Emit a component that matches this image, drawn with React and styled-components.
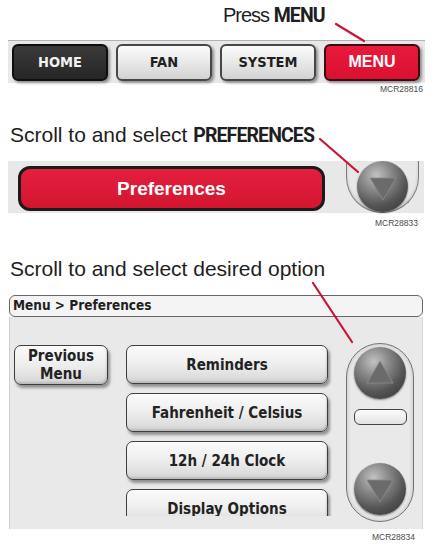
import React from 'react';
import styled, { createGlobalStyle } from 'styled-components';

const GlobalStyle = createGlobalStyle`
  body {
    margin: 0;
    background: #fff;
    font-family: "Liberation Sans", Arial, sans-serif;
    color: #1e1e1e;
  }
`;

const Page = styled.div`
  position: relative;
  width: 435px;
  height: 550px;
  box-sizing: border-box;
  padding: 3px 10px 0 8px;
  overflow: hidden;
`;

const Caption = styled.div`
  height: 24px;
  font-size: ${p => p.size || 21}px;
  line-height: 24px;
  margin-top: ${p => p.top || 0}px;
  padding-left: ${p => p.indent || 2}px;
  letter-spacing: ${p => p.tight ? '-1px' : '0'};
  white-space: nowrap;
`;

// condensed bold keyword inside a caption
const Strong = styled.b`
  font-family: Roboto, "Liberation Sans", sans-serif;
  font-weight: 700;
  font-size: 19.5px;
  line-height: 1;
  letter-spacing: -0.9px;
`;

const FigCode = styled.div`
  font-size: 8.5px;
  line-height: 10px;
  color: #4a4a4a;
  text-align: right;
  margin-top: ${p => p.top || 1}px;
  padding-right: ${p => p.right || 2}px;
`;

/* ---- top bar ---- */

const TopBar = styled.div`
  margin-top: 13px;
  width: 417px;
  height: 43px;
  box-sizing: border-box;
  display: flex;
  align-items: center;
  gap: 8px;
  padding: 0 5px 0 4px;
  background: #e8e8e8;
  border-top: 1px solid #b2b2b2;
`;

const tones = {
  dark: { bg: 'linear-gradient(#3a3a3a, #262626)', fg: '#f2f2f2', border: '#0e0e0e' },
  light: { bg: 'linear-gradient(#fbfbfb, #e4e4e4 60%, #d2d2d2)', fg: '#1f1f1f', border: '#474747' },
  red: { bg: 'linear-gradient(#e81a3d, #d9112f)', fg: '#fff', border: '#3a0b10' },
};

const TabButton = styled.div`
  flex: 1;
  height: 37px;
  box-sizing: border-box;
  display: flex;
  align-items: center;
  justify-content: center;
  border-radius: 6px;
  border: 2px solid ${p => tones[p.tone].border};
  background: ${p => tones[p.tone].bg};
  color: ${p => tones[p.tone].fg};
  box-shadow: 2px 2px 3px rgba(0, 0, 0, 0.4);
  font-family: ${p => p.tone === 'red'
    ? '"Liberation Sans", Arial, sans-serif'
    : '"DejaVu Sans Condensed", "DejaVu Sans", sans-serif'};
  font-weight: 700;
  font-size: ${p => p.tone === 'red' ? 16 : 14.5}px;
`;

/* ---- preferences bar ---- */

const SelectBar = styled.div`
  margin-top: 14px;
  width: 416px;
  height: 52px;
  box-sizing: border-box;
  display: flex;
  align-items: flex-start;
  padding: 5px 5px 0 10px;
  background: #e8e8e8;
`;

const PrefButton = styled.div`
  width: 307px;
  height: 45px;
  box-sizing: border-box;
  display: flex;
  align-items: center;
  justify-content: center;
  border: 3px solid #1b1b1b;
  border-radius: 12px;
  background: linear-gradient(#e3203f, #d3152f);
  color: #fff;
  font-weight: 700;
  font-size: 19px;
`;

const HalfWell = styled.div`
  margin-left: auto;
  margin-top: -5px;
  width: 73px;
  height: 52px;
  box-sizing: border-box;
  display: flex;
  justify-content: center;
  border: 1.5px solid #7a7a7a;
  border-top: none;
  border-radius: 0 0 36px 36px;
  box-shadow: inset 0 -2px 3px rgba(0, 0, 0, 0.15);
`;

/* ---- menu panel ---- */

const Panel = styled.div`
  margin-top: 14px;
  margin-left: 1px;
  width: 414px;
`;

const PanelHead = styled.div`
  height: 22px;
  box-sizing: border-box;
  border: 1.5px solid #666;
  border-radius: 6px;
  background: #f4f4f4;
  padding-left: 3px;
  line-height: 19px;
  font-family: "DejaVu Sans Condensed", "DejaVu Sans", sans-serif;
  font-weight: 700;
  font-size: 13.5px;
  color: #1f1f1f;
`;

const PanelBody = styled.div`
  height: 212px;
  box-sizing: border-box;
  display: flex;
  align-items: flex-start;
  padding: 28px 0 0 4px;
  background: #e9e9e9;
  border-left: 1px solid #cfcfcf;
  border-right: 1px solid #d6d6d6;
`;

const OptionList = styled.div`
  margin-left: 18px;
  width: 202px;
  height: 171px;
  overflow: hidden;
  display: flex;
  flex-direction: column;
  gap: 9px;
  padding: 0 4px 0 0;
`;

const KeyButton = styled.div`
  width: ${p => p.w || 202}px;
  height: ${p => p.h || 39}px;
  flex: none;
  box-sizing: border-box;
  display: flex;
  align-items: center;
  justify-content: center;
  text-align: center;
  border: 1.5px solid #3e3e3e;
  border-radius: 7px;
  background: linear-gradient(#fbfbfb, #ececec 55%, #d4d4d4);
  box-shadow: 2px 3px 3px rgba(0, 0, 0, 0.38), inset -1px -2px 2px rgba(0, 0, 0, 0.12);
  font-family: "DejaVu Sans Condensed", "DejaVu Sans", sans-serif;
  font-weight: 700;
  font-size: 15px;
  line-height: 18px;
  color: #222;
`;

const ScrollWell = styled.div`
  margin-left: 14px;
  margin-top: -2px;
  width: 68px;
  height: 179px;
  box-sizing: border-box;
  display: flex;
  flex-direction: column;
  align-items: center;
  padding-top: 3px;
  border: 1.5px solid #727272;
  border-radius: 34px;
  box-shadow: inset 0 0 4px rgba(0, 0, 0, 0.18);
`;

const Slot = styled.div`
  margin: 10px 0 38px;
  width: 53px;
  height: 16px;
  box-sizing: border-box;
  border: 1.5px solid #444;
  border-radius: 6px;
  background: linear-gradient(#fdfdfd, #e2e2e2);
`;

const Ball = styled.div`
  width: ${p => p.size}px;
  height: ${p => p.size}px;
  flex: none;
  border-radius: 50%;
  display: flex;
  align-items: center;
  justify-content: center;
  background: radial-gradient(circle at 38% 28%, #c2c2c2 0%, #8a8a8a 30%, #555 62%, #2f2f2f 100%);
  box-shadow: 0 1px 2px rgba(0, 0, 0, 0.45);
`;

const Overlay = styled.svg`
  position: absolute;
  top: 0;
  left: 0;
  pointer-events: none;
`;

function ScrollBall({ size = 52, dir = 'down' }) {
  const pts = dir === 'down' ? '1,1 27,1 14,23' : '14,1 27,23 1,23';
  return (
    <Ball size={size}>
      <svg width="28" height="24" viewBox="0 0 28 24" style={{ marginTop: dir === 'down' ? 4 : -2 }}>
        <polygon points={pts} fill="#6b6b6b" stroke="#8c8c8c" strokeWidth="0.8" strokeLinejoin="round" />
      </svg>
    </Ball>
  );
}

const tabs = [
  { label: 'HOME', tone: 'dark' },
  { label: 'FAN', tone: 'light' },
  { label: 'SYSTEM', tone: 'light' },
  { label: 'MENU', tone: 'red' },
];

const options = ['Reminders', 'Fahrenheit / Celsius', '12h / 24h Clock', 'Display Options'];

export default function App() {
  return (
    <>
      <GlobalStyle />
      <Page>
        <Caption size={20} indent={215} tight>
          Press <Strong>MENU</Strong>
        </Caption>
        <TopBar>
          {tabs.map(t => (
            <TabButton key={t.label} tone={t.tone}>{t.label}</TabButton>
          ))}
        </TopBar>
        <FigCode right={2}>MCR28816</FigCode>

        <Caption top={29}>
          Scroll to and select <Strong>PREFERENCES</Strong>
        </Caption>
        <SelectBar>
          <PrefButton>Preferences</PrefButton>
          <HalfWell>
            <ScrollBall size={51} dir="down" />
          </HalfWell>
        </SelectBar>
        <FigCode top={5} right={7}>MCR28833</FigCode>

        <Caption top={29}>Scroll to and select desired option</Caption>
        <Panel>
          <PanelHead>Menu &gt; Preferences</PanelHead>
          <PanelBody>
            <KeyButton w={94} h={40}>Previous<br />Menu</KeyButton>
            <OptionList>
              {options.map(o => (
                <KeyButton key={o}>{o}</KeyButton>
              ))}
            </OptionList>
            <ScrollWell>
              <ScrollBall size={52} dir="up" />
              <Slot />
              <ScrollBall size={52} dir="down" />
            </ScrollWell>
          </PanelBody>
        </Panel>
        <FigCode top={3} right={10}>MCR28834</FigCode>

        <Overlay width="435" height="550">
          <g stroke="#cf1238" strokeWidth="2.2" strokeLinecap="round">
            <line x1="336" y1="24" x2="364" y2="41" />
            <line x1="320" y1="139" x2="358" y2="172" />
            <line x1="313" y1="283" x2="352" y2="342" />
          </g>
        </Overlay>
      </Page>
    </>
  );
}
